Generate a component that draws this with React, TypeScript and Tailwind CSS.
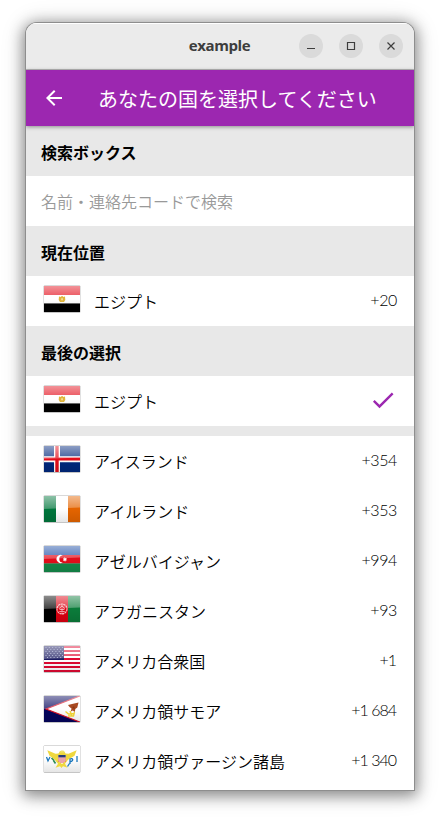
import type { ReactNode } from "react";

const flags: Record<string, ReactNode> = {
  eg: (
    <>
      <path fill="#e30d1a" d="M0 0h36v9H0z" />
      <path fill="#fff" d="M0 9h36v8.500H0z" />
      <path fill="#000" d="M0 17.500h36V26H0z" />
    </>
  ),
  is: (
    <>
      <path fill="#00277c" d="M0 0h36v26H0z" />
      <path fill="#fff" d="M10 0h6v26h-6zM0 10.300h36v6H0z" />
      <path fill="#e30d1a" d="M11.300 0h3.400v26h-3.400zM0 11.600h36v3H0z" />
    </>
  ),
  ie: (
    <>
      <path fill="#00763c" d="M0 0h12v26H0z" />
      <path fill="#fff" d="M12 0h12v26H12z" />
      <path fill="#e46400" d="M24 0h12v26H24z" />
    </>
  ),
  az: (
    <>
      <path fill="#1a4ba4" d="M0 0h36v9H0z" />
      <path fill="#e30d1a" d="M0 9h36v8.500H0z" />
      <path fill="#148a4a" d="M0 17.500h36V26H0z" />
    </>
  ),
  af: (
    <>
      <path fill="#000" d="M0 0h12v26H0z" />
      <path fill="#dc0010" d="M12 0h12v26H12z" />
      <path fill="#0b7b3a" d="M24 0h12v26H24z" />
    </>
  ),
  us: (
    <>
      <path fill="#fff" d="M0 0h36v26H0z" />
      <path fill="#e00a32" d="M0 0h36v2H0zM0 4h36v2H0zM0 8h36v2H0zM0 12h36v2H0zM0 16h36v2H0zM0 20h36v2H0zM0 24h36v2H0z" />
      <path fill="#1c1c62" d="M0 0h20v14H0z" />
    </>
  ),
  as: (
    <>
      <path fill="#04045c" d="M0 0h36v26H0z" />
      <path fill="#fff" stroke="#d80f24" strokeWidth="1.200" d="M37-.5L2 13l35 13.500z" />
    </>
  ),
  vi: <path fill="#fff" d="M0 0h36v26H0z" />,
};

const emblems: Record<string, ReactNode> = {
  eg: (
    <>
      <path fill="#e0b53c" d="M15 10.500l2 .6.600-1h1l.4 1 2-.6.300 3.500-1.300 2h-4l-1.300-2z" />
      <path fill="#f7e6ae" d="M17.300 12.200h1.500v2h-1.500z" />
    </>
  ),
  az: (
    <>
      <path fill="#fff" d="M18.800 9.400a4.100 4.100 0 1 0 0 7 3.500 3.500 0 1 1 0-7z" />
      <path fill="#fff" d="M20.800 11l.6 1.300 1.400-.4-.6 1.300.8 1-1.400.2-.5 1.400-.9-1.200-1.300.1.700-1.300-.7-1.100 1.300.1z" />
    </>
  ),
  af: (
    <g fill="none" stroke="#fff" strokeOpacity=".75">
      <circle cx="18" cy="13" r="5" strokeDasharray="2.200 .5" strokeWidth="1.100" />
      <path d="M15.300 15.500h5.400M15.800 13.500v-1.600l2.200-1.700 2.200 1.700v1.600zM16.500 17.200h3M18 8.500v2M18 12v3" strokeWidth=".8" />
    </g>
  ),
  us: (
    <g stroke="#b9bdd8" strokeWidth="1" strokeDasharray="1 2.300">
      <path d="M1.500 1.500H19M3 3.500h15M1.500 5.500H19M3 7.500h15M1.500 9.500H19M3 11.500h15" />
    </g>
  ),
  as: (
    <>
      <path fill="#a94a22" d="M24 9l4-1 6.500-1.500-1.200 5-2 1.500-.5 3-2-1.500-2 1 .7-3-2-1.500z" />
      <path fill="none" stroke="#edcf34" strokeWidth="1.400" d="M21.500 15.500l3 2.500 6-.5M24 20h5.500l1-4M26 15l2 5" />
      <path fill="#8a3716" d="M28 12l2-2 1 3z" />
    </>
  ),
  vi: (
    <>
      <path fill="#efd83e" d="M3.300 4.300l8.200 3.400 3-.2 1.500-2.500h4l1.500 2.500 3 .2 8.200-3.400-2.200 5.400-6.500 4-3 4 2.500 4-4.500-1.500-1.500 1.800-1.500-1.800-4.500 1.500 2.500-4-3.500-4.300-5-3.700z" />
      <path fill="#eee36e" d="M16 6.500l1-2h2.500l.8 2z" />
      <path fill="#fff" d="M14.300 9h7.400v6l-3.700 3-3.700-3z" />
      <path fill="#273b78" d="M14.300 9h7.400v2.500h-7.400z" />
      <path stroke="#d84a59" strokeWidth="1" d="M15 11.500V16M17 11.500V17M19 11.500V17M21 11.500V16" />
      <path fill="none" stroke="#348e59" strokeWidth="1.700" d="M7.500 12l2.500 2.500M9.500 14.500l2 3" />
      <path fill="none" stroke="#1b77bc" strokeWidth="1.300" d="M2.500 11l1.500 4L6 11M33 10v6M26 18V13c3-1.500 4 2 .3 2.500M25.500 17.500l-2 3" />
    </>
  ),
};

function Flag({ code }: { code: string }) {
  return (
    <svg width="38" height="29" viewBox="-1 -1 38 29" className="mt-[-4px] shrink-0">
      <defs>
        <linearGradient id="gloss" x1="0" y1="0" x2="0" y2="1">
          <stop offset="0" stopColor="#fff" stopOpacity=".55" />
          <stop offset="1" stopColor="#fff" stopOpacity=".25" />
        </linearGradient>
        <linearGradient id="shade" x1="0" y1="0" x2="0" y2="1">
          <stop offset="0" stopColor="#000" stopOpacity="0" />
          <stop offset="1" stopColor="#000" stopOpacity=".1" />
        </linearGradient>
      </defs>
      <rect x="-.4" y="-.4" width="36.800" height="27.200" rx="1" fill="#000" opacity=".3" />
      <svg width="36" height="26" viewBox="0 0 36 26">
        {flags[code]}
        <path fill="url(#gloss)" d="M0 0h36v11.500Q18 12 0 13z" />
        <path fill="url(#shade)" d="M0 13h36v13H0z" />
        {emblems[code]}
      </svg>
    </svg>
  );
}

function Check() {
  return (
    <svg width="28" height="28" viewBox="0 0 24 24" fill="#9c27b0" className="mb-[2px]">
      <path d="M9 16.170L4.830 12l-1.420 1.410L9 19 21 7l-1.410-1.410z" />
    </svg>
  );
}

function DialCode({ value }: { value: string }) {
  const tracking = value.startsWith("+1") ? "tracking-[-1px] pr-[1px]" : "tracking-[-0.4px]";
  return (
    <span className={`mb-[2px] whitespace-nowrap font-['Lato','Open_Sans',sans-serif] text-[16px] font-light leading-6 text-black ${tracking}`}>
      {value}
    </span>
  );
}

function Country({ code, name, dial }: { code: string; name: string; dial?: string }) {
  return (
    <div className="flex h-[50px] shrink-0 items-center bg-white pl-[17px] pr-[17px]">
      <Flag code={code} />
      <span className="ml-[13px] grow whitespace-nowrap text-[16px] font-[350] leading-6 text-black">{name}</span>
      {dial ? <DialCode value={dial} /> : <Check />}
    </div>
  );
}

function Heading({ children }: { children: string }) {
  return <div className="flex h-[50px] shrink-0 items-center bg-[#e8e8e8] pl-[15px] pt-[1px] text-[16px] font-bold text-black">{children}</div>;
}

const countries = [
  ["is", "アイスランド", "+354"],
  ["ie", "アイルランド", "+353"],
  ["az", "アゼルバイジャン", "+994"],
  ["af", "アフガニスタン", "+93"],
  ["us", "アメリカ合衆国", "+1"],
  ["as", "アメリカ領サモア", "+1 684"],
  ["vi", "アメリカ領ヴァージン諸島", "+1 340"],
];

export default function App() {
  return (
    <div className="h-[819px] w-[440px] overflow-hidden bg-white pl-[26px] pt-[23px] font-['Noto_Sans_CJK_JP',sans-serif]">
      <div className="flex h-[767px] w-[388px] flex-col overflow-hidden rounded-t-[11px] bg-white shadow-[0_0_0_1px_#8e8e8e,0_3px_14px_3px_rgba(0,0,0,0.38),0_2px_24px_2px_rgba(0,0,0,0.16)]">
        <div className="grid h-[47px] shrink-0 grid-cols-[1fr_auto_1fr] items-center border-b border-[#b8b8b8] bg-[#ebebeb] shadow-[inset_0_1px_0_#fff]">
          <span />
          <span className="mr-[1px] pb-[2px] font-['Open_Sans','Noto_Sans',sans-serif] text-[15px] font-bold tracking-[-0.4px] text-[#3d3d3d]">example</span>
          <div className="flex justify-end gap-4 pr-[11px]">
            {["M8 14.500h8", "M8.500 8.500h7v7h-7z", "M8.500 8.500l7 7M15.500 8.500l-7 7"].map((d) => (
              <span key={d} className="flex size-6 items-center justify-center rounded-full bg-[#dadada]">
                <svg width="24" height="24" viewBox="0 0 24 24" fill="none" stroke="#3d3d3d" strokeWidth="1.200">
                  <path d={d} />
                </svg>
              </span>
            ))}
          </div>
        </div>
        <div className="z-10 flex h-14 shrink-0 items-center bg-[#9c27b0] pl-4 text-white shadow-[0_1px_4px_rgba(0,0,0,0.4)]">
          <svg width="24" height="24" viewBox="0 0 24 24" fill="currentColor">
            <path d="M20 11H7.830l5.590-5.590L12 4l-8 8 8 8 1.410-1.410L7.830 13H20v-2z" />
          </svg>
          <h1 className="ml-8 whitespace-nowrap pt-[2px] text-[20px] font-normal">あなたの国を選択してください</h1>
        </div>
        <Heading>検索ボックス</Heading>
        <div className="flex h-[50px] shrink-0 items-center pl-[15px] text-[16px] font-[350] text-[#999]">名前・連絡先コードで検索</div>
        <Heading>現在位置</Heading>
        <Country code="eg" name="エジプト" dial="+20" />
        <Heading>最後の選択</Heading>
        <Country code="eg" name="エジプト" />
        <div className="h-[10px] shrink-0 bg-[#e8e8e8]" />
        {countries.map(([code, name, dial]) => (
          <Country key={code} code={code} name={name} dial={dial} />
        ))}
      </div>
    </div>
  );
}
